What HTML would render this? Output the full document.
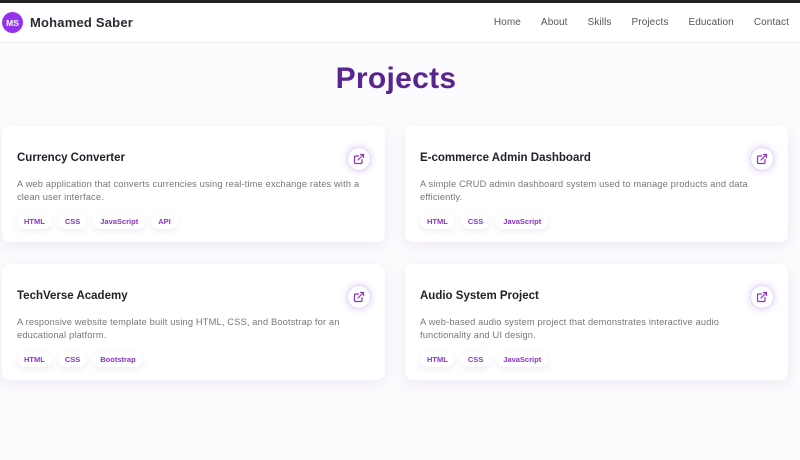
<!DOCTYPE html>
<html><head><meta charset="utf-8"><style>
*{margin:0;padding:0;box-sizing:border-box}
body{width:800px;height:460px;overflow:hidden;font-family:"Liberation Sans",sans-serif;background:#fcfbfd;position:relative}
.top{height:3px;background:#222}
header{height:40px;background:#fff;border-bottom:1px solid #eeeaf0;display:flex;align-items:center;padding-left:2px}
.logo{width:21px;height:21px;border-radius:50%;background:#9333ea;color:#fff;font-size:8.5px;font-weight:bold;display:flex;align-items:center;justify-content:center}
.name{margin-left:7px;font-size:13px;font-weight:bold;color:#2a2a35;letter-spacing:.2px}
nav{position:absolute;right:11px;top:17px;display:flex}
nav a{font-size:10px;color:#555;text-decoration:none;margin-left:20px;letter-spacing:.1px}
h1{position:absolute;top:62px;left:-4px;width:100%;text-align:center;font-size:30px;color:#5b2590;font-weight:bold;letter-spacing:.3px}
.card{position:absolute;width:383px;height:116px;background:#fff;border-radius:8px;box-shadow:0 4px 14px rgba(120,80,150,.10)}
.card h3{position:absolute;left:15px;top:26px;font-size:11.5px;color:#22222c}
.card p{position:absolute;left:15px;top:52px;width:352px;font-size:9.3px;line-height:13px;color:#777;letter-spacing:.15px}
.tags{position:absolute;left:15px;top:88px;display:flex;gap:6px}
.tags span{font-size:7.5px;font-weight:bold;color:#8a34c4;padding:3px 7px;background:#fff;border-radius:10px;box-shadow:0 2px 6px rgba(120,80,150,.12)}
.ic{position:absolute;right:14px;top:21px;width:24px;height:24px;border-radius:50%;background:#fff;border:1px solid #e8d8f5;box-shadow:0 0 8px rgba(150,80,220,.3);display:flex;align-items:center;justify-content:center}
</style></head><body>
<div class="top"></div>
<header><div class="logo">MS</div><div class="name">Mohamed Saber</div>
<nav><a>Home</a><a>About</a><a>Skills</a><a>Projects</a><a>Education</a><a>Contact</a></nav></header>
<h1>Projects</h1>
<div class="card" style="left:2px;top:126px"><h3>Currency Converter</h3><div class="ic"><svg width="12" height="12" viewBox="0 0 24 24" fill="none" stroke="#8a34c4" stroke-width="2.4" stroke-linecap="round"><path d="M18 13v6a2 2 0 0 1-2 2H5a2 2 0 0 1-2-2V8a2 2 0 0 1 2-2h6M15 3h6v6M10 14L21 3"/></svg></div>
<p>A web application that converts currencies using real-time exchange rates with a clean user interface.</p>
<div class="tags"><span>HTML</span><span>CSS</span><span>JavaScript</span><span>API</span></div></div>
<div class="card" style="left:405px;top:126px"><h3>E-commerce Admin Dashboard</h3><div class="ic"><svg width="12" height="12" viewBox="0 0 24 24" fill="none" stroke="#8a34c4" stroke-width="2.4" stroke-linecap="round"><path d="M18 13v6a2 2 0 0 1-2 2H5a2 2 0 0 1-2-2V8a2 2 0 0 1 2-2h6M15 3h6v6M10 14L21 3"/></svg></div>
<p>A simple CRUD admin dashboard system used to manage products and data efficiently.</p>
<div class="tags"><span>HTML</span><span>CSS</span><span>JavaScript</span></div></div>
<div class="card" style="left:2px;top:264px"><h3>TechVerse Academy</h3><div class="ic"><svg width="12" height="12" viewBox="0 0 24 24" fill="none" stroke="#8a34c4" stroke-width="2.4" stroke-linecap="round"><path d="M18 13v6a2 2 0 0 1-2 2H5a2 2 0 0 1-2-2V8a2 2 0 0 1 2-2h6M15 3h6v6M10 14L21 3"/></svg></div>
<p>A responsive website template built using HTML, CSS, and Bootstrap for an educational platform.</p>
<div class="tags"><span>HTML</span><span>CSS</span><span>Bootstrap</span></div></div>
<div class="card" style="left:405px;top:264px"><h3>Audio System Project</h3><div class="ic"><svg width="12" height="12" viewBox="0 0 24 24" fill="none" stroke="#8a34c4" stroke-width="2.4" stroke-linecap="round"><path d="M18 13v6a2 2 0 0 1-2 2H5a2 2 0 0 1-2-2V8a2 2 0 0 1 2-2h6M15 3h6v6M10 14L21 3"/></svg></div>
<p>A web-based audio system project that demonstrates interactive audio functionality and UI design.</p>
<div class="tags"><span>HTML</span><span>CSS</span><span>JavaScript</span></div></div>
</body></html>
